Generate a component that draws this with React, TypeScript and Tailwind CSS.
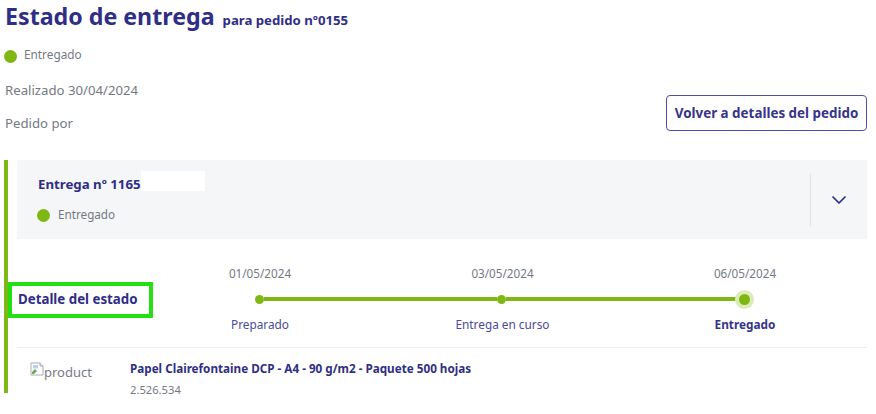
import { ChevronDown } from "lucide-react";

const font = { fontFamily: '"Noto Sans", sans-serif' };

function Step({ children, bold }: { children: string; bold?: boolean }) {
  return (
    <span className={`w-[120px] text-center text-[11.8px] leading-[16px] ${bold ? "font-bold text-[#35348a]" : "text-[#4a4a9c]"}`}>
      {children}
    </span>
  );
}

function DateLabel({ children }: { children: string }) {
  return <span className="w-[120px] text-center text-[11.7px] leading-[16px] text-[#747984]">{children}</span>;
}

function BrokenImage() {
  return (
    <svg width="14" height="14" viewBox="0 0 14 14" className="mt-[2px] shrink-0">
      <path d="M1 1h9l3 3v9H1z" fill="#fff" stroke="#a9acb3" />
      <path d="M10 1v3h3" fill="#e3e5e8" stroke="#a9acb3" />
      <path d="M2 10l3-3 2 2-3 3H2z" fill="#6fa85a" />
      <path d="M3 3h5v3.5H3z" fill="#b9d2f0" />
    </svg>
  );
}

export default function App() {
  return (
    <div className="h-[414px] w-[876px] overflow-hidden bg-white pr-[9px]" style={font}>
      <div className="flex items-baseline gap-[8px] pl-[5px]">
        <h1 className="text-[23.2px] font-bold leading-[32px] text-[#2f2e86]">Estado de entrega</h1>
        <span className="text-[13.2px] font-bold text-[#2f2e86]">para pedido nº0155</span>
      </div>
      <div className="flex items-start justify-between pl-[5px]">
        <div>
          <div className="mt-[13px] flex items-center gap-[7px]">
            <span className="-ml-[1px] mt-[5px] h-[13px] w-[13px] rounded-full bg-[#7fb814]" />
            <span className="text-[11.8px] leading-[16px] text-[#747984]">Entregado</span>
          </div>
          <p className="mt-[18px] text-[13.2px] leading-[18px] text-[#747984]">Realizado 30/04/2024</p>
          <p className="mt-[15px] text-[13.2px] leading-[18px] text-[#747984]">Pedido por</p>
        </div>
        <button className="mt-[63px] h-[36px] w-[201px] rounded-[4px] border-[1.5px] border-[#4f4ea6] bg-white pt-[1px] text-[13.4px] font-bold text-[#35348a]">
          Volver a detalles del pedido
        </button>
      </div>

      <div className="ml-[4px] mt-[28px] h-[233px] border-l-4 border-[#7fb814] pl-[9px]">
        <div className="flex h-[79px] items-center justify-between bg-[#f5f6f8] pl-[21px]">
          <div className="pb-[4px]">
            <div className="flex items-start">
              <span className="text-[13.25px] font-bold leading-[20px] text-[#2f2e86]">Entrega nº 1165</span>
              <span className="-mt-[3px] h-[20px] w-[64px] bg-white" />
            </div>
            <div className="mt-[12px] flex items-center gap-[8px]">
              <span className="-ml-[1px] mt-[3px] h-[13px] w-[13px] rounded-full bg-[#7fb814]" />
              <span className="text-[11.7px] leading-[16px] text-[#747984]">Entregado</span>
            </div>
          </div>
          <div className="flex h-[54px] w-[57px] items-center justify-center border-l border-[#dfe2e8]">
            <ChevronDown size={24} strokeWidth={1.75} className="text-[#2f2e86]" />
          </div>
        </div>

        <div className="flex items-center pt-[26px]">
          <div className="-ml-[9px] mt-[3px] flex h-[36px] w-[145px] items-center border-4 border-[#22e012] pl-[6px] text-[13.3px] font-bold text-[#2f2e86]">
            Detalle del estado
          </div>
          <div className="ml-[47px] w-[605px]">
            <div className="flex justify-between">
              <DateLabel>01/05/2024</DateLabel>
              <DateLabel>03/05/2024</DateLabel>
              <DateLabel>06/05/2024</DateLabel>
            </div>
            <div className="mx-[55px] mb-[12px] mt-[13px] flex h-[10px] items-center">
              <span className="h-[9px] w-[9px] shrink-0 rounded-full bg-[#7fb814]" />
              <span className="h-[3.5px] flex-1 bg-[#7fb814]" />
              <span className="h-[9px] w-[9px] shrink-0 rounded-full bg-[#7fb814]" />
              <span className="h-[3.5px] flex-1 bg-[#7fb814]" />
              <span className="h-[11px] w-[11px] shrink-0 rounded-full bg-[#7fb814] ring-[4px] ring-[#dcebb8]" />
            </div>
            <div className="flex justify-between">
              <Step>Preparado</Step>
              <Step>Entrega en curso</Step>
              <Step bold>Entregado</Step>
            </div>
          </div>
        </div>

        <div className="mt-[15px] flex border-t border-[#eeeff2] pt-[12px]">
          <div className="ml-[13px] flex h-[20px] w-[100px] items-start">
            <BrokenImage />
            <span className="mt-[2px] text-[13px] leading-[20px] text-[#777b85]">product</span>
          </div>
          <div>
            <p className="text-[11.7px] font-bold leading-[16px] text-[#2f2e86]">
              Papel Clairefontaine DCP - A4 - 90 g/m2 - Paquete 500 hojas
            </p>
            <p className="mt-[6px] text-[11.2px] leading-[16px] text-[#747984]">2.526.534</p>
          </div>
        </div>
      </div>
    </div>
  );
}
